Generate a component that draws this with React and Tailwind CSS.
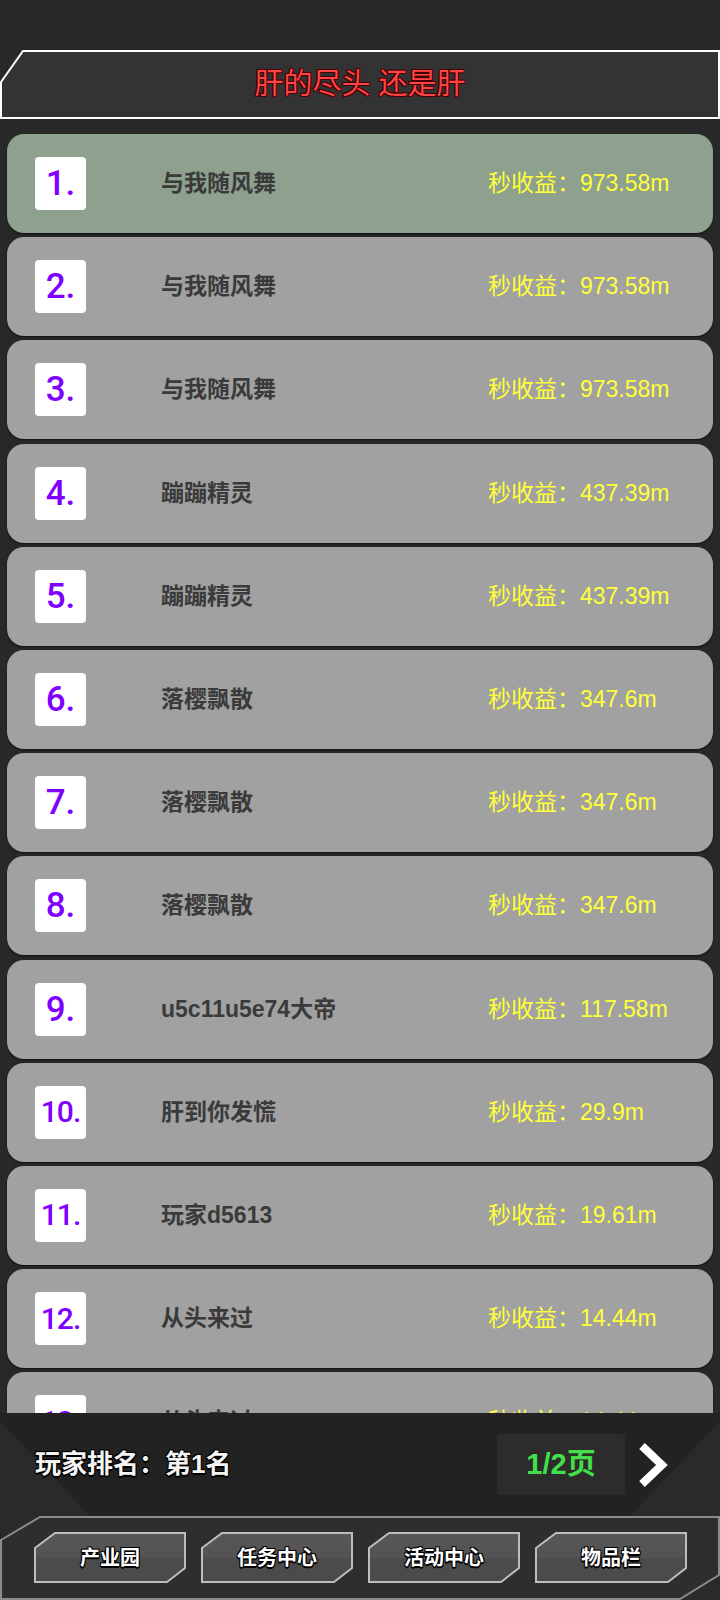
import React from "react";

const rows = [
  { rank: 1, name: "与我随风舞", income: "973.58m" },
  { rank: 2, name: "与我随风舞", income: "973.58m" },
  { rank: 3, name: "与我随风舞", income: "973.58m" },
  { rank: 4, name: "蹦蹦精灵", income: "437.39m" },
  { rank: 5, name: "蹦蹦精灵", income: "437.39m" },
  { rank: 6, name: "落樱飘散", income: "347.6m" },
  { rank: 7, name: "落樱飘散", income: "347.6m" },
  { rank: 8, name: "落樱飘散", income: "347.6m" },
  { rank: 9, name: "u5c11u5e74大帝", income: "117.58m" },
  { rank: 10, name: "肝到你发慌", income: "29.9m" },
  { rank: 11, name: "玩家d5613", income: "19.61m" },
  { rank: 12, name: "从头来过", income: "14.44m" },
  { rank: 13, name: "从头来过", income: "14.44m" },
];

const navItems = ["产业园", "任务中心", "活动中心", "物品栏"];

const outline =
  "[text-shadow:-1px_-1px_0_#000,1px_-1px_0_#000,-1px_1px_0_#000,1px_1px_0_#000,0_2px_0_#000]";

const RankRow = ({ row }) => (
  <div
    className={
      "shrink-0 h-[99px] rounded-[17px] flex items-center shadow-[0_1px_2px_rgba(0,0,0,0.6)] " +
      (row.rank === 1 ? "bg-[#8ea08e]" : "bg-[#a1a1a1]")
    }
  >
    <div className="ml-[28px] w-[51px] h-[53px] bg-white rounded-[4px] flex items-center justify-center">
      <span
        className={
          "text-[#8000ff] leading-none font-medium font-['Roboto',sans-serif] " +
          (row.rank >= 10 ? "text-[30px] tracking-[-1px]" : "text-[35px]")
        }
      >
        {row.rank}.
      </span>
    </div>
    <div className="ml-[75px] w-[327px] text-[23px] font-bold text-[#3a3a3a] leading-none">
      {row.name}
    </div>
    <div className="text-[23px] text-[#ffff3a] leading-none">
      秒收益：{row.income}
    </div>
  </div>
);

const NavButton = ({ label }) => (
  <div className="relative w-[152px] h-[51px] flex items-center justify-center">
    <svg className="absolute inset-0" width="152" height="51" viewBox="0 0 152 51">
      <defs>
        <linearGradient id="btnfill" x1="0" y1="0" x2="0" y2="1">
          <stop offset="0" stopColor="#575757" />
          <stop offset="0.5" stopColor="#535353" />
          <stop offset="0.52" stopColor="#4c4c4c" />
          <stop offset="1" stopColor="#4a4a4a" />
        </linearGradient>
      </defs>
      <polygon
        points="1,16 21,1 151,1 151,36 133,50 1,50"
        fill="url(#btnfill)"
        stroke="#bdbdbd"
        strokeWidth="2"
      />
    </svg>
    <span className={"relative text-white text-[20px] font-bold " + outline}>
      {label}
    </span>
  </div>
);

export default function App() {
  return (
    <div className="w-[720px] h-[1600px] bg-[#282828] flex flex-col overflow-hidden font-['Liberation_Sans','Noto_Sans_CJK_SC',sans-serif]">
      <div className="h-[50px] shrink-0" />

      {/* Header */}
      <div className="relative h-[70px] shrink-0 flex items-center justify-center">
        <svg className="absolute inset-0" width="720" height="70" viewBox="0 0 720 70">
          <polygon
            points="1,32 23,1 719,1 719,68 1,68"
            fill="#333333"
            stroke="#ffffff"
            strokeWidth="2"
          />
        </svg>
        <span className="relative text-[29px] text-[#ff4444] [text-shadow:-1px_-1px_0_#400,1px_-1px_0_#400,-1px_1px_0_#400,1px_1px_0_#400]">
          肝的尽头 还是肝
        </span>
      </div>

      {/* List */}
      <div className="flex-1 min-h-0 overflow-hidden px-[7px] pt-[14px] flex flex-col gap-[4.2px]">
        {rows.map((row) => (
          <RankRow key={row.rank} row={row} />
        ))}
      </div>

      {/* Bottom panel */}
      <div className="relative h-[187px] shrink-0 bg-[#2a2a2a] flex flex-col">
        <div className="absolute inset-0 bg-[#222222] [clip-path:polygon(0_0,100%_0,100%_8px,630px_103px,90px_103px,0_8px)]" />
        <div className="relative h-[103px] flex items-center pl-[35px]">
          <span className={"text-[26px] font-bold text-[#f4f4f4] " + outline}>玩家排名：第1名</span>
          <div className="ml-auto w-[128px] h-[61px] bg-[#2c2c2c] rounded-[3px] flex items-center justify-center">
            <span className="text-[29px] font-bold text-[#44e04a]">1/2页</span>
          </div>
          <svg className="ml-[13px] mr-[52px]" width="30" height="46" viewBox="0 0 30 46">
            <polyline
              points="4,4 24,23 4,42"
              fill="none"
              stroke="#ffffff"
              strokeWidth="8"
            />
          </svg>
        </div>
        <div className="relative h-[84px] flex items-start pt-[16px] pl-[34px] gap-[15px]">
          <svg className="absolute inset-0" width="720" height="84" viewBox="0 0 720 84">
            <polygon
              points="1,24 40,1 719,1 719,59 680,83 1,83"
              fill="#2e2e2e"
              stroke="#8c8c8c"
              strokeWidth="2"
            />
          </svg>
          {navItems.map((label) => (
            <NavButton key={label} label={label} />
          ))}
        </div>
      </div>
    </div>
  );
}
